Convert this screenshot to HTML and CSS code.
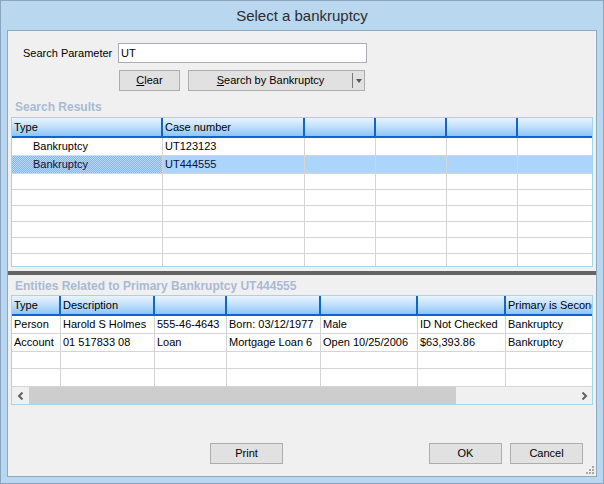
FILE: index.html
```html
<!DOCTYPE html>
<html lang="en">
<head>
<meta charset="utf-8">
<title>Select a bankruptcy</title>
<link rel="stylesheet" href="styles.css">
</head>
<body>
<div class="window">
  <div class="titlebar">Select a bankruptcy</div>
  <div class="client">
    <div class="search-row">
      <span class="field-label">Search Parameter</span>
      <div class="textbox">UT</div>
    </div>
    <div class="button-row">
      <button class="btn btn-clear"><u>C</u>lear</button>
      <button class="btn btn-split"><span class="split-text"><u>S</u>earch by Bankruptcy</span><span class="split-sep"></span><span class="split-arrow"></span></button>
    </div>
    <div class="section-label first">Search Results</div>
    <div class="grid grid1">
      <div class="viewport">
        <div class="row head"><div class="cell">Type</div><div class="cell">Case number</div><div class="cell"></div><div class="cell"></div><div class="cell"></div><div class="cell"></div></div>
        <div class="row tall"><div class="cell indent">Bankruptcy</div><div class="cell">UT123123</div><div class="cell"></div><div class="cell"></div><div class="cell"></div><div class="cell"></div></div>
        <div class="row tall selected"><div class="cell indent focus">Bankruptcy</div><div class="cell">UT444555</div><div class="cell"></div><div class="cell"></div><div class="cell"></div><div class="cell"></div></div>
        <div class="row"><div class="cell"></div><div class="cell"></div><div class="cell"></div><div class="cell"></div><div class="cell"></div><div class="cell"></div></div>
        <div class="row"><div class="cell"></div><div class="cell"></div><div class="cell"></div><div class="cell"></div><div class="cell"></div><div class="cell"></div></div>
        <div class="row"><div class="cell"></div><div class="cell"></div><div class="cell"></div><div class="cell"></div><div class="cell"></div><div class="cell"></div></div>
        <div class="row"><div class="cell"></div><div class="cell"></div><div class="cell"></div><div class="cell"></div><div class="cell"></div><div class="cell"></div></div>
        <div class="row"><div class="cell"></div><div class="cell"></div><div class="cell"></div><div class="cell"></div><div class="cell"></div><div class="cell"></div></div>
        <div class="row"><div class="cell"></div><div class="cell"></div><div class="cell"></div><div class="cell"></div><div class="cell"></div><div class="cell"></div></div>
      </div>
    </div>
    <div class="splitter"></div>
    <div class="section-label second">Entities Related to Primary Bankruptcy UT444555</div>
    <div class="grid grid2">
      <div class="viewport">
        <div class="row head"><div class="cell">Type</div><div class="cell">Description</div><div class="cell"></div><div class="cell"></div><div class="cell"></div><div class="cell"></div><div class="cell">Primary is Secondary</div></div>
        <div class="row tall"><div class="cell">Person</div><div class="cell">Harold S Holmes</div><div class="cell">555-46-4643</div><div class="cell">Born: 03/12/1977</div><div class="cell">Male</div><div class="cell">ID Not Checked</div><div class="cell">Bankruptcy</div></div>
        <div class="row tall"><div class="cell">Account</div><div class="cell">01 517833 08</div><div class="cell">Loan</div><div class="cell">Mortgage Loan 6</div><div class="cell">Open 10/25/2006</div><div class="cell">$63,393.86</div><div class="cell">Bankruptcy</div></div>
        <div class="row mid"><div class="cell"></div><div class="cell"></div><div class="cell"></div><div class="cell"></div><div class="cell"></div><div class="cell"></div><div class="cell"></div></div>
        <div class="row tall"><div class="cell"></div><div class="cell"></div><div class="cell"></div><div class="cell"></div><div class="cell"></div><div class="cell"></div><div class="cell"></div></div>
      </div>
      <div class="hscroll">
        <div class="sb-arrow"><svg width="8" height="8" viewBox="0 0 8 8"><polyline points="5.5,0.5 2,4 5.5,7.5" fill="none" stroke="#606060" stroke-width="2"/></svg></div>
        <div class="sb-thumb"></div>
        <div class="sb-track"></div>
        <div class="sb-arrow"><svg width="8" height="8" viewBox="0 0 8 8"><polyline points="2.5,0.5 6,4 2.5,7.5" fill="none" stroke="#606060" stroke-width="2"/></svg></div>
      </div>
    </div>
    <div class="footer">
      <button class="btn btn-foot">Print</button>
      <div class="spacer"></div>
      <button class="btn btn-foot">OK</button>
      <button class="btn btn-foot btn-cancel">Cancel</button>
    </div>
    <svg class="grip" width="8" height="8" viewBox="0 0 8 8">
      <rect x="6" y="0" width="2" height="2" fill="#a8a8a8"/>
      <rect x="3" y="3" width="2" height="2" fill="#a8a8a8"/>
      <rect x="6" y="3" width="2" height="2" fill="#a8a8a8"/>
      <rect x="0" y="6" width="2" height="2" fill="#a8a8a8"/>
      <rect x="3" y="6" width="2" height="2" fill="#a8a8a8"/>
      <rect x="6" y="6" width="2" height="2" fill="#a8a8a8"/>
    </svg>
  </div>
</div>
</body>
</html>
```

FILE: styles.css
```css
html, body {
  margin: 0;
  padding: 0;
}

body {
  font-family: "Liberation Sans", Arial, sans-serif;
  font-size: 11px;
  color: #000;
}

.window {
  width: 604px;
  height: 484px;
  box-sizing: border-box;
  border: 1px solid #8ba5c0;
  background: #b9d7ee;
  padding: 0 6px 6px;
  display: flex;
  flex-direction: column;
}

.titlebar {
  height: 29px;
  line-height: 29px;
  text-align: center;
  font-size: 15px;
  color: #2e2e2e;
}

.client {
  flex: 1;
  border: 1px solid #8fa8c2;
  background: #f0f0f0;
  display: flex;
  flex-direction: column;
  position: relative;
}

.search-row {
  display: flex;
  align-items: center;
  height: 20px;
  margin-top: 12px;
  padding-left: 15px;
}

.field-label {
  width: 95px;
}

.textbox {
  width: 249px;
  height: 20px;
  box-sizing: border-box;
  border: 1px solid #abadb3;
  background: #fff;
  padding-left: 2px;
  line-height: 18px;
}

.button-row {
  display: flex;
  gap: 8px;
  height: 21px;
  margin-top: 7px;
  padding-left: 111px;
}

.btn {
  font: inherit;
  color: #000;
  height: 21px;
  box-sizing: border-box;
  border: 1px solid #adadad;
  background: #e1e1e1;
  padding: 0;
  margin: 0;
  line-height: 19px;
}

.btn-clear {
  width: 61px;
}

.btn-split {
  width: 177px;
  display: flex;
  align-items: stretch;
}

.split-text {
  flex: 1;
  text-align: center;
  line-height: 19px;
}

.split-sep {
  width: 1px;
  background: #7a7a7a;
  margin: 2px 0;
}

.split-arrow {
  width: 11px;
  display: flex;
  align-items: center;
  justify-content: center;
}

.split-arrow::before {
  content: "";
  border-left: 3.5px solid transparent;
  border-right: 3.5px solid transparent;
  border-top: 4px solid #555;
  margin-top: 1px;
}

.section-label {
  font-weight: bold;
  font-size: 12px;
  line-height: 14px;
  color: #a8bad4;
  padding-left: 7px;
}

.section-label.first {
  padding-top: 9px;
  padding-bottom: 3px;
}

.section-label.second {
  padding-top: 4px;
  padding-bottom: 2px;
}

.grid {
  margin: 0 3px;
  border: 1px solid #a3d5e8;
  background: #fff;
  box-sizing: border-box;
  display: flex;
  flex-direction: column;
}

.grid1 {
  height: 150px;
}

.grid2 {
  height: 110px;
}

.viewport {
  flex: 1;
  overflow: hidden;
  min-height: 0;
}

.row {
  display: grid;
  height: 16px;
}

.grid1 .row {
  grid-template-columns: 151px 142px 71px 71px 71px 74px;
}

.grid2 .row {
  grid-template-columns: 49px 94px 72px 94px 97px 88px 110px;
}

.cell {
  box-sizing: border-box;
  border-right: 1px solid #d5d5d5;
  border-bottom: 1px solid #d5d5d5;
  padding-left: 2px;
  white-space: nowrap;
  overflow: hidden;
  line-height: 15px;
}

.grid1 .row .cell:last-child {
  border-right: none;
}

.row.tall {
  height: 18px;
}

.row.tall .cell {
  line-height: 17px;
}

.row.mid {
  height: 17px;
}

.row.mid .cell {
  line-height: 16px;
}

.row.head {
  height: 20px;
}

.row.head .cell {
  background: linear-gradient(#e9f4fe, #c4e1fc 45%, #8ec5f7);
  border-bottom: 2px solid #0b66cc;
  border-right: 2px solid #1466c6;
  line-height: 18px;
}

.grid1 .row.head .cell:last-child {
  border-right: none;
}

.cell.indent {
  padding-left: 21px;
}

.row.selected .cell {
  background: #abd5fb;
  color: #10103a;
}

.row.selected .cell.focus {
  background: repeating-conic-gradient(#93b4d6 0 25%, #b3d8fb 0 50%) 0 0 / 2px 2px;
}

.splitter {
  height: 4px;
  margin-top: 4px;
  background: #646464;
}

.hscroll {
  height: 17px;
  display: flex;
  background: #f0f0f0;
  flex: none;
}

.sb-arrow {
  width: 17px;
  display: flex;
  align-items: center;
  justify-content: center;
}

.sb-thumb {
  width: 427px;
  background: #cdcdcd;
}

.sb-track {
  flex: 1;
}

.footer {
  display: flex;
  height: 21px;
  margin-top: 38px;
  padding-left: 202px;
  padding-right: 13px;
}

.btn-foot {
  width: 73px;
}

.btn-cancel {
  margin-left: 8px;
}

.spacer {
  flex: 1;
}

.grip {
  position: absolute;
  right: 2px;
  bottom: 2px;
}
```
